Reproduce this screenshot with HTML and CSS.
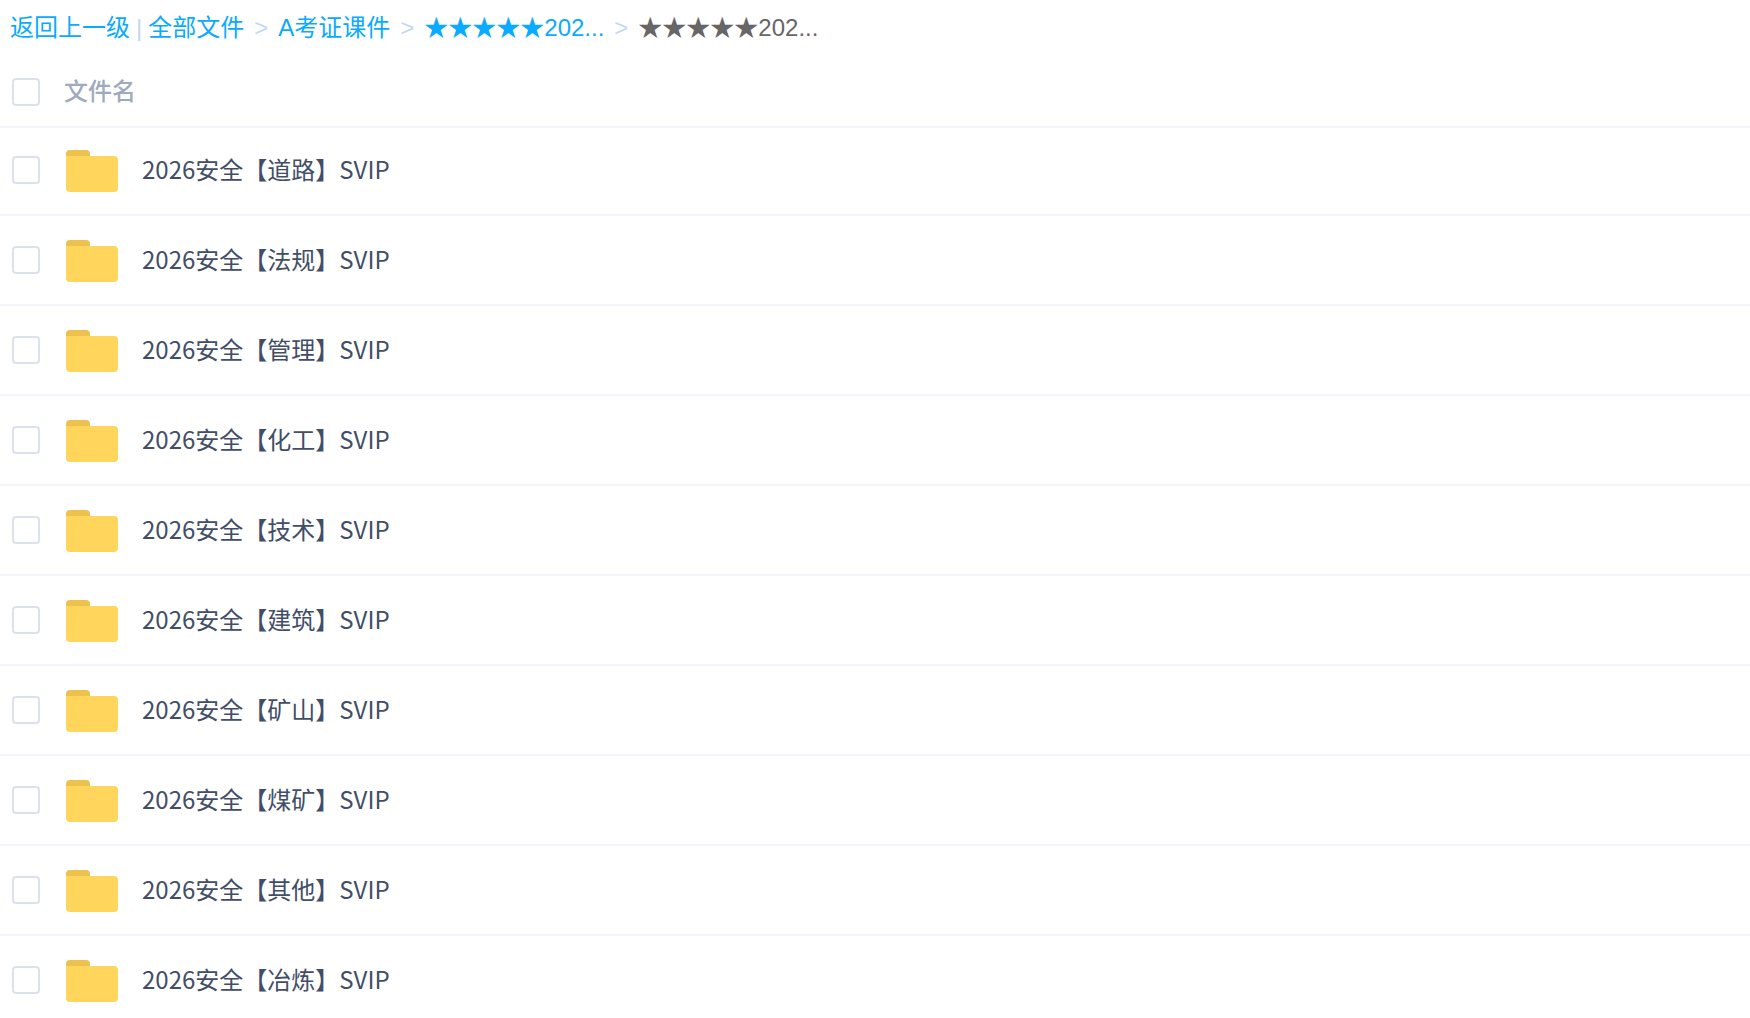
FILE: index.html
```html
<!DOCTYPE html>
<html lang="zh-CN">
<head>
    <meta charset="UTF-8">
    <meta name="viewport" content="width=device-width, initial-scale=1.0">
    <title>全部文件</title>
    <link rel="stylesheet" href="styles.css">
</head>
<body>
    <!-- folder icon, reused by every row -->
    <svg class="sprite" aria-hidden="true">
        <symbol id="folder" viewBox="0 0 52 42">
            <path fill="#edc14d" d="M0 10V4a4 4 0 0 1 4-4h16a4 4 0 0 1 4 4v6z"/>
            <path fill="#ffd55c" d="M0 6h48a4 4 0 0 1 4 4v28a4 4 0 0 1-4 4H4a4 4 0 0 1-4-4z"/>
        </symbol>
    </svg>

    <nav class="breadcrumb">
        <a href="#">返回上一级</a>
        <span class="divider">|</span>
        <a href="#">全部文件</a>
        <span class="arrow">&gt;</span>
        <a href="#">A考证课件</a>
        <span class="arrow">&gt;</span>
        <a href="#">★★★★★202...</a>
        <span class="arrow">&gt;</span>
        <span class="current">★★★★★202...</span>
    </nav>

    <table class="file-list">
        <colgroup>
            <col class="col-check">
            <col class="col-icon">
            <col>
        </colgroup>
        <thead>
            <tr>
                <th class="check"><input type="checkbox" id="checkAll" aria-label="全选"></th>
                <th colspan="2"><label for="checkAll">文件名</label></th>
            </tr>
        </thead>
        <tbody>
            <tr>
                <td class="check"><input type="checkbox" id="f1"></td>
                <td class="icon"><svg><use href="#folder"/></svg></td>
                <td class="name"><label for="f1">2026安全【道路】SVIP</label></td>
            </tr>
            <tr>
                <td class="check"><input type="checkbox" id="f2"></td>
                <td class="icon"><svg><use href="#folder"/></svg></td>
                <td class="name"><label for="f2">2026安全【法规】SVIP</label></td>
            </tr>
            <tr>
                <td class="check"><input type="checkbox" id="f3"></td>
                <td class="icon"><svg><use href="#folder"/></svg></td>
                <td class="name"><label for="f3">2026安全【管理】SVIP</label></td>
            </tr>
            <tr>
                <td class="check"><input type="checkbox" id="f4"></td>
                <td class="icon"><svg><use href="#folder"/></svg></td>
                <td class="name"><label for="f4">2026安全【化工】SVIP</label></td>
            </tr>
            <tr>
                <td class="check"><input type="checkbox" id="f5"></td>
                <td class="icon"><svg><use href="#folder"/></svg></td>
                <td class="name"><label for="f5">2026安全【技术】SVIP</label></td>
            </tr>
            <tr>
                <td class="check"><input type="checkbox" id="f6"></td>
                <td class="icon"><svg><use href="#folder"/></svg></td>
                <td class="name"><label for="f6">2026安全【建筑】SVIP</label></td>
            </tr>
            <tr>
                <td class="check"><input type="checkbox" id="f7"></td>
                <td class="icon"><svg><use href="#folder"/></svg></td>
                <td class="name"><label for="f7">2026安全【矿山】SVIP</label></td>
            </tr>
            <tr>
                <td class="check"><input type="checkbox" id="f8"></td>
                <td class="icon"><svg><use href="#folder"/></svg></td>
                <td class="name"><label for="f8">2026安全【煤矿】SVIP</label></td>
            </tr>
            <tr>
                <td class="check"><input type="checkbox" id="f9"></td>
                <td class="icon"><svg><use href="#folder"/></svg></td>
                <td class="name"><label for="f9">2026安全【其他】SVIP</label></td>
            </tr>
            <tr>
                <td class="check"><input type="checkbox" id="f10"></td>
                <td class="icon"><svg><use href="#folder"/></svg></td>
                <td class="name"><label for="f10">2026安全【冶炼】SVIP</label></td>
            </tr>
        </tbody>
    </table>
</body>
</html>
```

FILE: styles.css
```css
body {
    margin: 0;
    background-color: #fff;
    color: #424e67;
    font-family: "Noto Sans CJK SC", sans-serif;
    font-size: 24px;
}
.sprite {
    display: none;
}

/* breadcrumb */
.breadcrumb {
    display: flex;
    align-items: baseline;
    height: 48px;
    padding: 8px 0 0 10px;
    font-family: "Liberation Sans", "Noto Sans CJK SC", sans-serif;
    white-space: nowrap;
}
.breadcrumb a {
    color: #09aaff;
    text-decoration: none;
}
.breadcrumb a:hover {
    text-decoration: underline;
}
.divider {
    margin: 0 6px;
    color: #c4d8f4;
}
.arrow {
    margin: 0 10px;
    color: #c4d8f4;
}
.current {
    color: #666;
}

/* file list */
.file-list {
    width: 100%;
    border-collapse: separate;
    border-spacing: 0;
    table-layout: fixed;
}
.col-check {
    width: 64px;
}
.col-icon {
    width: 78px;
}
.file-list th,
.file-list td {
    box-sizing: border-box;
    padding: 0;
    line-height: 32px;
    text-align: left;
    vertical-align: middle;
}
.file-list th {
    height: 70px;
    padding-bottom: 2px;
    color: #a0aabd;
    font-weight: 500;
    box-shadow: 0 2px 0 #f2f6fc;
}
.file-list td {
    height: 90px;
    border-bottom: 2px solid #f2f6fc;
}
.file-list tr:last-child td {
    height: 88px;
    border-bottom: none;
}
.file-list .check {
    padding-left: 12px;
}
.file-list th.check {
    padding: 2px 0 0 12px;
}
.file-list .icon {
    padding: 2px 0 0 2px;
}
.file-list .name {
    padding-bottom: 2px;
}
.icon svg {
    display: block;
    width: 52px;
    height: 42px;
}
input[type="checkbox"] {
    appearance: none;
    display: block;
    box-sizing: border-box;
    width: 28px;
    height: 28px;
    margin: 0;
    border: 2px solid #dce2ec;
    border-radius: 4px;
    background-color: #fff;
    cursor: pointer;
}
input[type="checkbox"]:checked {
    border-color: #09aaff;
    background-color: #09aaff;
}
```
